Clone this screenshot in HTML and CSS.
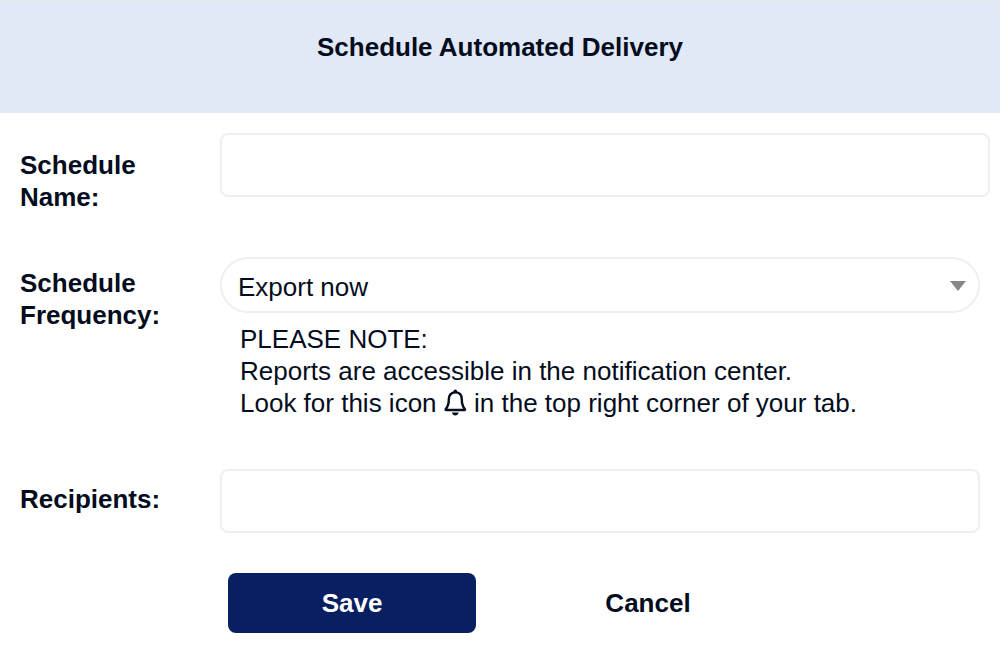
FILE: index.html
```html
<!DOCTYPE html>
<html lang="en">
<head>
<meta charset="utf-8">
<meta name="viewport" content="width=device-width, initial-scale=1">
<title>Schedule Automated Delivery</title>
<link rel="stylesheet" href="styles.css">
</head>
<body>
<header class="header"><h1 class="title">Schedule Automated Delivery</h1></header>
<form class="form">
  <div class="row row-name">
    <label class="label" for="name">Schedule Name:</label>
    <input class="input" id="name" type="text">
  </div>
  <div class="row row-frequency">
    <label class="label" for="frequency">Schedule Frequency:</label>
    <div class="field">
      <div class="select-wrap">
        <select class="select" id="frequency"><option>Export now</option></select>
        <svg class="caret" viewBox="0 0 16 10" aria-hidden="true"><path d="M0 0h16L8 10z"/></svg>
      </div>
      <p class="note">PLEASE NOTE:<br>Reports are accessible in the notification center.<br>Look for this icon <svg class="bell" viewBox="0 0 23 28" aria-hidden="true"><path class="bell-line" d="M11.3 3.4c-4.4 0-6.500 3-6.500 7 0 5.200-1.200 7.400-2.900 9.300-.6.7-.4 1.300.4 1.300h18c.8 0 1-.6.4-1.300-1.700-1.900-2.900-4.100-2.900-9.300 0-4-2.100-7-6.500-7z"/><path d="M9.500 3.600V2.200a1.800 1.800 0 0 1 3.600 0v1.400zM7.900 23.400h6.800c-.5 1.900-1.700 3-3.400 3s-2.900-1.100-3.400-3z"/></svg> in the top right corner of your tab.</p>
    </div>
  </div>
  <div class="row row-recipients">
    <label class="label" for="recipients">Recipients:</label>
    <input class="input" id="recipients" type="text">
  </div>
  <div class="actions">
    <button class="button button-save" type="submit">Save</button>
    <button class="button button-cancel" type="button">Cancel</button>
  </div>
</form>
</body>
</html>
```

FILE: styles.css
```css
* { box-sizing: border-box; }
body {
  margin: 0;
  background: #fff;
  color: #040d1e;
  font-family: "Liberation Sans", Arial, sans-serif;
  font-size: 26px;
  line-height: 32px;
}
.header {
  padding: 30px 20px 50px;
  border-top: 1px solid #e6e8ec;
  background: #e1e8f6;
}
.title { margin: 0; font-size: 26px; text-align: center; }
.form { padding: 20px 20px 19px; }
.row {
  display: grid;
  grid-template-columns: 160px minmax(0, 1fr);
  column-gap: 40px;
  align-items: start;
}
.label { font-weight: 700; }
.row-name { margin-right: -10px; }
.row-name .label { padding-top: 16px; }
.row-frequency { margin-top: 44px; }
.row-frequency .label { padding-top: 10px; }
.row-recipients { margin-top: 50px; }
.row-recipients .label { padding-top: 14px; }
.input {
  width: 100%;
  height: 64px;
  padding: 0 16px;
  border: 2px solid #efefef;
  border-radius: 8px;
  background: #fff;
  color: inherit;
  font: inherit;
}
.select-wrap { position: relative; }
.select {
  display: block;
  width: 100%;
  height: 56px;
  padding: 4px 44px 0 16px;
  border: 2px solid #efefef;
  border-radius: 28px;
  appearance: none;
  background: #fff;
  color: inherit;
  font: inherit;
}
.caret {
  position: absolute;
  top: 24px;
  right: 14px;
  width: 16px;
  height: 10px;
  fill: #888;
  pointer-events: none;
}
.note { margin: 10px 0 0 20px; }
.bell { width: 23px; height: 28px; vertical-align: -5px; fill: #040d1e; }
.bell-line { fill: none; stroke: #040d1e; stroke-width: 2.4; }
.actions {
  display: grid;
  grid-template-columns: 248px 248px;
  column-gap: 48px;
  margin: 40px 0 0 208px;
}
.button {
  height: 60px;
  padding: 0;
  border: 0;
  border-radius: 8px;
  background: none;
  color: inherit;
  font: inherit;
  font-weight: 700;
}
.button-save { background: #081f62; color: #fff; }
```
